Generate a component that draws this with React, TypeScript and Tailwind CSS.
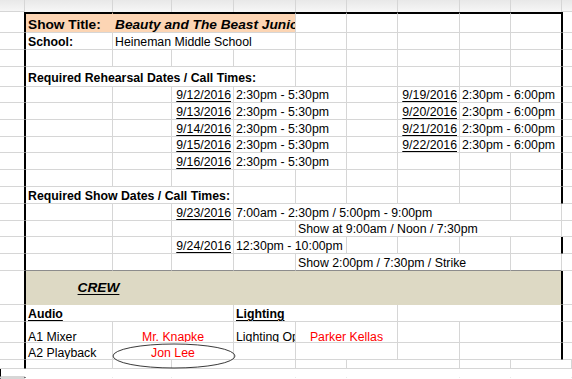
import type { ReactNode } from "react";

type Cell = { span?: number; text?: ReactNode; cls?: string; line?: string; middle?: boolean };
type Row = { h: string; cells: Cell[]; open?: boolean; top?: string; under?: string; lead?: string };

const grid = "grid grid-cols-[25px_88px_59px_62px_62px_51px_51px_62px_51px_51px_10px]";
const spanCls: Record<number, string> = { 1: "", 2: "col-span-2", 3: "col-span-3", 4: "col-span-4", 5: "col-span-5", 9: "col-span-9" };

const blank = (n: number): Cell[] => Array.from({ length: n }, () => ({}));
const dt = (d: string): Cell => ({ text: <span className="underline underline-offset-2">{d}</span>, cls: "justify-end" });
const red = (s: string): Cell => ({ span: 2, text: s, cls: "justify-center text-[#ff0000]" });
const bold = (s: string, span: number): Cell => ({ span, text: s, cls: "font-bold" });

const rehearsal = (a: string, b?: string): Cell[] => [
  {},
  {},
  dt(a),
  { span: 2, text: "2:30pm - 5:30pm" },
  {},
  ...(b ? [dt(b), { span: 2, text: "2:30pm - 6:00pm" }] : blank(3)),
];

const crewTail: Cell[] = [{}, { span: 2 }, {}, { span: 2 }, {}, { span: 2 }];

const rows: Row[] = [
  {
    h: "h-[21px]",
    top: "border-t-2 border-t-black",
    lead: "leading-[15px]",
    cells: [
      { text: "Show Title:", cls: "bg-[#fcd5b4] font-bold text-[13.7px]", line: "border-r-[#fcd5b4]" },
      { span: 3, text: "Beauty and The Beast Junior", cls: "bg-[#fcd5b4] font-bold italic text-[13.7px]" },
      ...blank(5),
    ],
  },
  { h: "h-[17px]", cells: [bold("School:", 1), { span: 3, text: "Heineman Middle School" }, ...blank(5)] },
  { h: "h-[17px]", cells: blank(9) },
  { h: "h-[20px]", cells: [{ ...bold("Required Rehearsal Dates / Call Times:", 4), cls: "font-bold pb-[1px]" }, ...blank(5)] },
  { h: "h-[16px]", cells: rehearsal("9/12/2016", "9/19/2016") },
  { h: "h-[17px]", cells: rehearsal("9/13/2016", "9/20/2016") },
  { h: "h-[17px]", cells: rehearsal("9/14/2016", "9/21/2016") },
  { h: "h-[16px]", cells: rehearsal("9/15/2016", "9/22/2016") },
  { h: "h-[17px]", cells: rehearsal("9/16/2016") },
  { h: "h-[17px]", cells: blank(9) },
  { h: "h-[17px]", cells: [bold("Required Show Dates / Call Times:", 3), ...blank(6)] },
  { h: "h-[17px]", open: true, cells: [{}, {}, dt("9/23/2016"), { span: 5, text: "7:00am - 2:30pm / 5:00pm - 9:00pm" }, {}] },
  { h: "h-[16px]", open: true, cells: [...blank(4), { span: 5, text: "Show at 9:00am / Noon / 7:30pm" }] },
  { h: "h-[17px]", cells: [{}, {}, dt("9/24/2016"), { span: 2, text: "12:30pm - 10:00pm" }, ...blank(4)] },
  {
    h: "h-[17px]",
    open: true,
    under: "border-b-[#8c8c8c]",
    cells: [...blank(4), { span: 4, text: "Show 2:00pm / 7:30pm / Strike" }, {}],
  },
  {
    h: "h-[34px]",
    under: "border-b-[#ddd9c4]",
    cells: [
      {
        span: 9,
        middle: true,
        cls: "bg-[#ddd9c4]",
        text: (
          <div className="w-[141px] text-center leading-[16px]">
            <span className="font-bold italic underline underline-offset-2 text-[13.7px]">CREW</span>
          </div>
        ),
      },
    ],
  },
  {
    h: "h-[17px]",
    cells: [
      { ...bold("Audio", 3), cls: "font-bold underline underline-offset-2" },
      { ...bold("Lighting", 3), cls: "font-bold underline underline-offset-2" },
      { span: 3 },
    ],
  },
  {
    h: "h-[21px]",
    lead: "leading-[10px]",
    cells: [{ text: "A1 Mixer" }, red("Mr. Knapke"), { text: "Lighting Operator" }, red("Parker Kellas"), {}, { span: 2 }],
  },
  { h: "h-[17px]", lead: "leading-[12px]", cells: [{ text: "A2 Playback" }, red("Jon Lee"), ...crewTail.slice(2)] },
  { h: "h-[17px]", cells: [{}, ...crewTail] },
  { h: "h-[2px]", under: "border-b-transparent", cells: [{}, ...crewTail] },
];

function SheetRow({ row }: { row: Row }) {
  let col = 1;
  const under = row.under ?? "border-b-[#d6d6d6]";
  return (
    <div className={`${grid} ${row.h}`}>
      <div className="border-r border-b border-r-black border-b-[#d6d6d6]" />
      {row.cells.map((c, i) => {
        const span = c.span ?? 1;
        const start = col;
        col += span;
        const right = col === 10 && !row.open ? "border-r-black" : c.line ?? "border-r-[#d6d6d6]";
        return (
          <div
            key={i}
            className={`${spanCls[span]} flex ${c.middle ? "items-center" : "items-end"} overflow-hidden whitespace-nowrap px-[2px] ${row.lead ?? "leading-[13px]"} border-r border-b ${right} ${under} ${row.top ?? ""} ${start === 1 ? "border-l border-l-black" : ""} ${c.cls ?? ""}`}
          >
            {c.text}
          </div>
        );
      })}
      <div className={`border-b border-b-[#d6d6d6] ${row.open ? "" : "border-l border-l-black"}`} />
    </div>
  );
}

export default function App() {
  return (
    <div className="relative w-[572px] h-[379px] overflow-hidden bg-white text-black text-[12.3px] font-['Liberation_Sans',Arial,sans-serif]">
      {/* partly visible row above the sheet */}
      <div className={`${grid} h-[12px] bg-linear-to-b from-[#e8e8e8] to-[#f7f7f7]`}>
        <div className="border-r border-b border-r-[#d6d6d6] border-b-[#d6d6d6]" />
        {Array.from({ length: 9 }, (_, i) => (
          <div key={i} className="border-r border-r-[#d6d6d6]" />
        ))}
        <div className="border-b border-b-[#d6d6d6]" />
      </div>

      {rows.map((row, i) => (
        <SheetRow key={i} row={row} />
      ))}

      <svg className="absolute left-[112px] top-[343px] w-[124px] h-[26px]" viewBox="0 0 124 26">
        <ellipse cx="62" cy="13" rx="61" ry="12" fill="none" stroke="#3a3a3a" strokeWidth="1" />
      </svg>
    </div>
  );
}
